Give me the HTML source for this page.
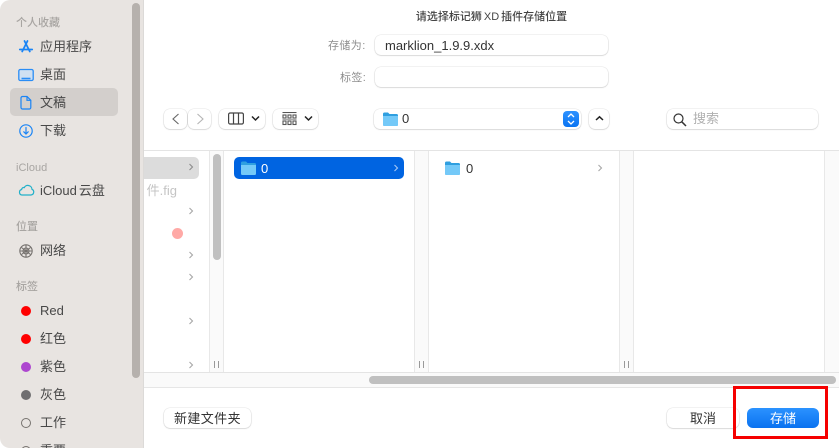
<!DOCTYPE html>
<html lang="zh"><head><meta charset="utf-8">
<style>
html,body{margin:0;padding:0;background:#fff}
#r{position:relative;width:839px;height:448px;overflow:hidden;background:#fff;font-family:"Liberation Sans","Noto Sans CJK SC",sans-serif;color:#333}
#r div,#r svg,#r span{position:absolute;box-sizing:border-box}
.t{white-space:nowrap;line-height:16px;height:16px}
.h{left:16px;font-size:11px;color:#a8a5a2;font-weight:500}
.i{left:40px;font-size:13px;color:#484848}
.d{left:21px;width:10px;height:10px;border-radius:50%}
.btn{background:#fff;border-radius:6px;box-shadow:0 0 0 .5px rgba(0,0,0,.07),0 .5px 1.5px rgba(0,0,0,.2)}
.chev{width:8px;height:10px}
.tr{background:#fafafa;border-left:1px solid #e8e8e8;border-right:1px solid #e8e8e8;top:151px;height:221px}
.gr{width:1px;height:7px;background:#999;top:361px}
</style></head><body><div id="r">
<div style="left:0;top:0;width:144px;height:448px;background:#e8e4e1;border-right:1px solid #dcdad8;border-radius:10px 0 0 10px"></div>
<div style="left:132px;top:3px;width:8px;height:375px;background:#b6b1ad;border-radius:4px"></div>
<div style="left:10px;top:88px;width:108px;height:28px;background:#d3cfcc;border-radius:5px"></div>

<div class="t h" style="top:15px">个人收藏</div>
<div class="t i" style="top:39px">应用程序</div>
<div class="t i" style="top:67px">桌面</div>
<div class="t i" style="top:95px">文稿</div>
<div class="t i" style="top:123px">下载</div>
<div class="t h" style="top:160px">iCloud</div>
<div class="t i" style="top:183px">iCloud<span style="position:static;margin-left:2px">云盘</span></div>
<div class="t h" style="top:219px">位置</div>
<div class="t i" style="top:243px">网络</div>
<div class="t h" style="top:279px">标签</div>
<div class="t i" style="top:303px">Red</div>
<div class="t i" style="top:331px">红色</div>
<div class="t i" style="top:359px">紫色</div>
<div class="t i" style="top:387px">灰色</div>
<div class="t i" style="top:415px">工作</div>
<div class="t i" style="top:443px">重要</div>

<svg style="left:18px;top:39px" width="16" height="15" viewBox="0 0 16 15" fill="none" stroke="#1a84f5" stroke-width="1.800" stroke-linecap="round"><path d="M6.500 2 11.800 12.500M9.500 2 4.200 12.500M1.800 10.500H14.200"/></svg>
<svg style="left:18px;top:68px" width="16" height="14" viewBox="0 0 16 14" fill="none" stroke="#2a8df5" stroke-width="1.300"><rect x=".8" y="1.500" width="14.400" height="11" rx="1.500" fill="#cfe0f2"/><path d="M3.500 10.500h9" stroke-width="1.600"/></svg>
<svg style="left:20px;top:95px" width="12" height="15" viewBox="0 0 12 15" fill="none" stroke="#1a84f5" stroke-width="1.200"><path d="M2.500 1.500H7L10.800 5.300V12.500A1.500 1.500 0 0 1 9.300 14H2.500A1.500 1.500 0 0 1 1 12.500V3A1.500 1.500 0 0 1 2.500 1.500Z"/><path d="M7 1.500V5.300H10.800"/></svg>
<svg style="left:19px;top:124px" width="14" height="14" viewBox="0 0 14 14" fill="none" stroke="#1a84f5" stroke-width="1.200" stroke-linecap="round"><circle cx="7" cy="7" r="6.200"/><path d="M7 3.500V9.800M4.800 7.800 7 10 9.200 7.800"/></svg>
<svg style="left:18px;top:184px" width="17" height="12" viewBox="0 0 17 12" fill="none" stroke="#22b0c9" stroke-width="1.200"><path d="M4 11H13A3 3 0 0 0 14 5.300 4 4 0 0 0 10.500 1.500C8.800 1 7 2 6.300 3.600 5 3.200 3.800 4 3.600 5.500A2.800 2.800 0 0 0 4 11Z"/></svg>
<svg style="left:19px;top:244px" width="14" height="14" viewBox="0 0 14 14" fill="none" stroke="#74706d" stroke-width="1.100"><circle cx="7" cy="7" r="6.200"/><path d="M7 1V13M1 7H13M2.500 3.500 11.500 10.500M11.500 3.500 2.500 10.500"/><circle cx="7" cy="7" r="3"/></svg>

<div class="d" style="top:306px;background:#ff0000"></div>
<div class="d" style="top:334px;background:#ff0000"></div>
<div class="d" style="top:362px;background:#ad46cf"></div>
<div class="d" style="top:390px;background:#6f6e70"></div>
<div class="d" style="top:418px;border:1px solid #77736f"></div>
<div class="d" style="top:446px;border:1px solid #77736f"></div>

<div class="t" style="left:144px;width:695px;text-align:center;top:9px;font-size:11px;color:#444;font-weight:500">请选择标记狮<span style="position:static;margin:0 2px">XD</span>插件存储位置</div>
<div class="t" style="left:328px;top:38px;font-size:11px;color:#8e8e8e;letter-spacing:.4px">存储为:</div>
<div class="t" style="left:340px;top:70px;font-size:11px;color:#8e8e8e;letter-spacing:.4px">标签:</div>
<div class="btn" style="left:375px;top:35px;width:233px;height:20px"></div>
<div class="t" style="left:385px;top:38px;font-size:13px;color:#333">marklion_1.9.9.xdx</div>
<div class="btn" style="left:375px;top:67px;width:233px;height:20px"></div>

<div class="btn" style="left:164px;top:109px;width:23px;height:20px"></div>
<div class="btn" style="left:188px;top:109px;width:23px;height:20px"></div>
<svg class="chev" style="left:171px;top:112px;width:9px;height:14px" viewBox="0 0 9 14" fill="none" stroke="#666" stroke-width="1.100"><path d="M7.500 2 2 7 7.500 12"/></svg>
<svg class="chev" style="left:196px;top:112px;width:9px;height:14px" viewBox="0 0 9 14" fill="none" stroke="#b4b4b4" stroke-width="1.100"><path d="M1.500 2 7 7 1.500 12"/></svg>

<div class="btn" style="left:219px;top:109px;width:46px;height:20px"></div>
<svg style="left:228px;top:112px" width="16" height="13" viewBox="0 0 16 13" fill="none" stroke="#444" stroke-width="1.200"><rect x=".6" y="1" width="14.800" height="11" rx="1.500"/><path d="M5.500 1V12M10.500 1V12"/></svg>
<svg style="left:251px;top:115px" width="9" height="7" viewBox="0 0 9 7" fill="none" stroke="#222" stroke-width="1.500"><path d="M1 1.500 4.500 5 8 1.500"/></svg>
<div class="btn" style="left:273px;top:109px;width:45px;height:20px"></div>
<svg style="left:282px;top:112px" width="15" height="14" viewBox="0 0 15 14" fill="none" stroke="#555" stroke-width="1.100"><path d="M.5 .5H14.500"/><rect x="1" y="3" width="3" height="3"/><rect x="6" y="3" width="3" height="3"/><rect x="11" y="3" width="3" height="3"/><path d="M.5 7.500H14.500" stroke="#aaa"/><rect x="1" y="9" width="3" height="3.500"/><rect x="6" y="9" width="3" height="3.500"/><rect x="11" y="9" width="3" height="3.500"/></svg>
<svg style="left:304px;top:115px" width="9" height="7" viewBox="0 0 9 7" fill="none" stroke="#222" stroke-width="1.500"><path d="M1 1.500 4.500 5 8 1.500"/></svg>

<div class="btn" style="left:374px;top:109px;width:207px;height:20px"></div>
<svg style="left:383px;top:112px" width="15" height="14" viewBox="0 0 15 14"><path d="M0 2A1.500 1.500 0 0 1 1.500 .5H5L6.500 2H13.500A1.500 1.500 0 0 1 15 3.500V12.500A1.500 1.500 0 0 1 13.500 14H1.500A1.500 1.500 0 0 1 0 12.500Z" fill="#2f9fe0"/><path d="M0 4H15V12.500A1.500 1.500 0 0 1 13.500 14H1.500A1.500 1.500 0 0 1 0 12.500Z" fill="#74c9f8"/></svg>
<div class="t" style="left:402px;top:111px;font-size:13px;color:#333">0</div>
<div style="left:563px;top:111px;width:16px;height:16px;background:linear-gradient(#2d92ff,#0a74f2);border-radius:4px"></div>
<svg style="left:566px;top:112px" width="10" height="14" viewBox="0 0 10 14" fill="none" stroke="#fff" stroke-width="1.300"><path d="M2 5 5 2 8 5M2 9 5 12 8 9"/></svg>
<div class="btn" style="left:589px;top:109px;width:20px;height:20px"></div>
<svg style="left:595px;top:115px" width="9" height="7" viewBox="0 0 9 7" fill="none" stroke="#222" stroke-width="1.500"><path d="M1 5 4.500 1.800 8 5"/></svg>

<div class="btn" style="left:667px;top:109px;width:151px;height:20px"></div>
<svg style="left:673px;top:113px" width="14" height="14" viewBox="0 0 14 14" fill="none" stroke="#333" stroke-width="1.200"><circle cx="5.500" cy="5.500" r="4.500"/><path d="M8.800 8.800 13 13" stroke-width="1.500"/></svg>
<div class="t" style="left:693px;top:111px;font-size:13px;color:#b0b0b0">搜索</div>

<div style="left:144px;top:150px;width:695px;height:1px;background:#e4e4e4"></div>
<div style="left:144px;top:157px;width:55px;height:22px;background:#dcdcdc;border-radius:0 5px 5px 0"></div>
<div style="left:144px;top:183px;width:33px;height:16px;overflow:hidden"><span class="t" style="right:0;top:0;font-size:13px;color:#c4c4c4">件.fig</span></div>
<div style="left:172px;top:228px;width:11px;height:11px;border-radius:50%;background:#ffa9a6"></div>
<svg style="left:188px;top:162px" width="6" height="10" viewBox="0 0 6 10" fill="none" stroke="#8c8c8c" stroke-width="1.100"><path d="M1.500 2 4.500 5 1.500 8"/></svg>
<svg style="left:188px;top:206px" width="6" height="10" viewBox="0 0 6 10" fill="none" stroke="#a8a8a8" stroke-width="1.100"><path d="M1.500 2 4.500 5 1.500 8"/></svg>
<svg style="left:188px;top:250px" width="6" height="10" viewBox="0 0 6 10" fill="none" stroke="#a8a8a8" stroke-width="1.100"><path d="M1.500 2 4.500 5 1.500 8"/></svg>
<svg style="left:188px;top:272px" width="6" height="10" viewBox="0 0 6 10" fill="none" stroke="#a8a8a8" stroke-width="1.100"><path d="M1.500 2 4.500 5 1.500 8"/></svg>
<svg style="left:188px;top:316px" width="6" height="10" viewBox="0 0 6 10" fill="none" stroke="#a8a8a8" stroke-width="1.100"><path d="M1.500 2 4.500 5 1.500 8"/></svg>
<svg style="left:188px;top:360px" width="6" height="10" viewBox="0 0 6 10" fill="none" stroke="#a8a8a8" stroke-width="1.100"><path d="M1.500 2 4.500 5 1.500 8"/></svg>

<div class="tr" style="left:209px;width:15px"></div>
<div style="left:213px;top:154px;width:8px;height:106px;background:#c0c0c0;border-radius:4px"></div>
<div class="gr" style="left:214px"></div><div class="gr" style="left:218px"></div>
<div class="tr" style="left:414px;width:15px"></div>
<div class="gr" style="left:419px"></div><div class="gr" style="left:423px"></div>
<div class="tr" style="left:619px;width:15px"></div>
<div class="gr" style="left:624px"></div><div class="gr" style="left:628px"></div>
<div class="tr" style="left:824px;width:15px;border-right:0"></div>

<div style="left:234px;top:157px;width:170px;height:22px;background:#0064e1;border-radius:5px"></div>
<svg style="left:241px;top:161px" width="15" height="14" viewBox="0 0 15 14"><path d="M0 2A1.500 1.500 0 0 1 1.500 .5H5L6.500 2H13.500A1.500 1.500 0 0 1 15 3.500V12.500A1.500 1.500 0 0 1 13.500 14H1.500A1.500 1.500 0 0 1 0 12.500Z" fill="#2f9fe0"/><path d="M0 4H15V12.500A1.500 1.500 0 0 1 13.500 14H1.500A1.500 1.500 0 0 1 0 12.500Z" fill="#74c9f8"/></svg>
<div class="t" style="left:261px;top:161px;font-size:13px;color:#fff">0</div>
<svg style="left:393px;top:163px" width="6" height="10" viewBox="0 0 6 10" fill="none" stroke="#a5c8f5" stroke-width="1.100"><path d="M1.500 2 4.500 5 1.500 8"/></svg>

<svg style="left:445px;top:161px" width="15" height="14" viewBox="0 0 15 14"><path d="M0 2A1.500 1.500 0 0 1 1.500 .5H5L6.500 2H13.500A1.500 1.500 0 0 1 15 3.500V12.500A1.500 1.500 0 0 1 13.500 14H1.500A1.500 1.500 0 0 1 0 12.500Z" fill="#2f9fe0"/><path d="M0 4H15V12.500A1.500 1.500 0 0 1 13.500 14H1.500A1.500 1.500 0 0 1 0 12.500Z" fill="#74c9f8"/></svg>
<div class="t" style="left:466px;top:161px;font-size:13px;color:#333">0</div>
<svg style="left:597px;top:163px" width="6" height="10" viewBox="0 0 6 10" fill="none" stroke="#a8a8a8" stroke-width="1.100"><path d="M1.500 2 4.500 5 1.500 8"/></svg>

<div style="left:144px;top:372px;width:695px;height:16px;background:#fafafa;border-top:1px solid #e4e4e4;border-bottom:1.500px solid #e6e6e6"></div>
<div style="left:369px;top:376px;width:467px;height:8px;background:#c0c0c0;border-radius:4px"></div>

<div class="btn" style="left:164px;top:408px;width:87px;height:20px"></div>
<div class="t" style="left:164px;width:87px;text-align:center;top:411px;font-size:13px;letter-spacing:.4px;color:#333">新建文件夹</div>
<div class="btn" style="left:667px;top:408px;width:72px;height:20px"></div>
<div class="t" style="left:667px;width:72px;text-align:center;top:411px;font-size:13px;color:#333">取消</div>
<div style="left:747px;top:408px;width:72px;height:20px;border-radius:6px;background:linear-gradient(#2b92ff,#0a72f0)"></div>
<div class="t" style="left:747px;width:72px;text-align:center;top:411px;font-size:13px;color:#fff">存储</div>
<div style="left:733px;top:386px;width:95px;height:53px;border:3px solid #f50000"></div>
</div></body></html>
